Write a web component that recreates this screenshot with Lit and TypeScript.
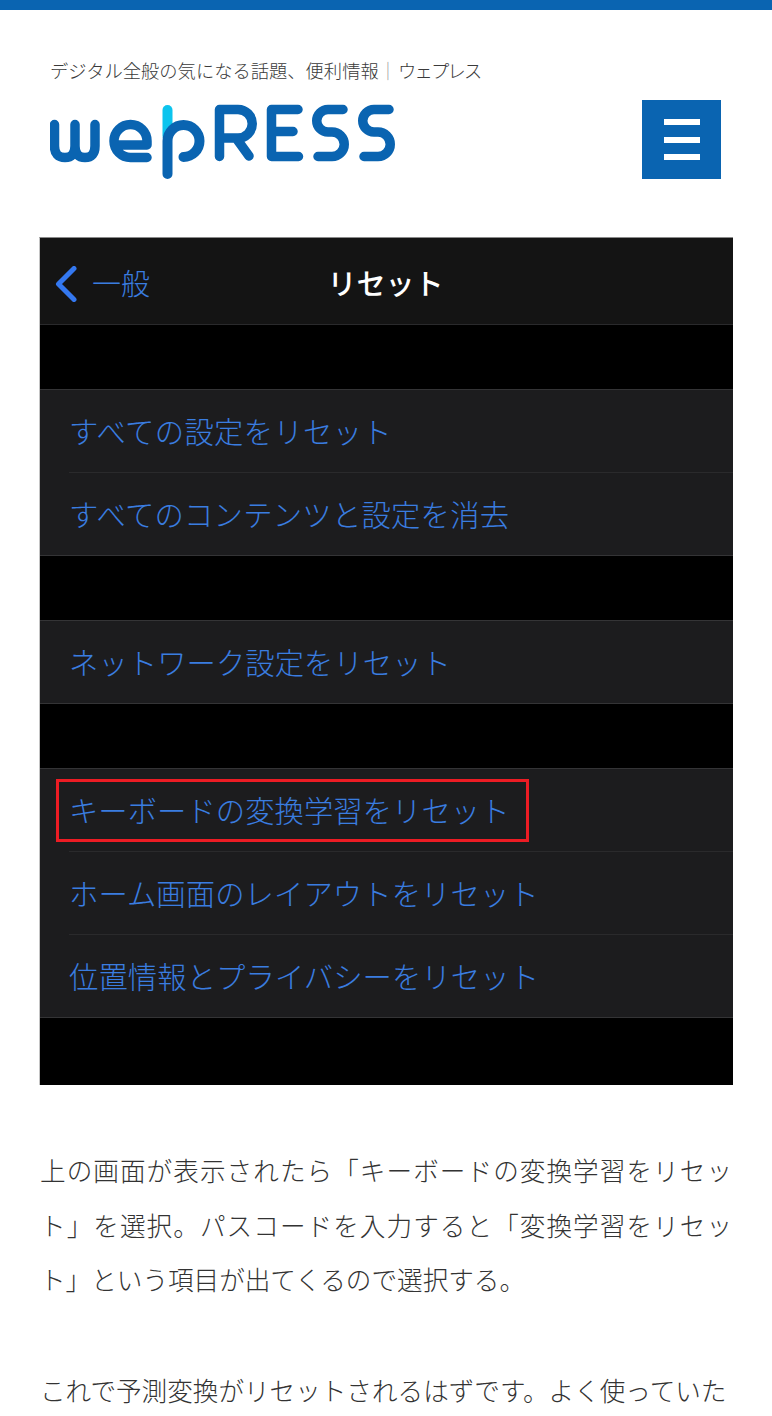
import { LitElement, html, css, svg } from "lit";
import { customElement } from "lit/decorators.js";

// spacing evens out the row widths of the iOS font in the screenshot
const groups = [
  [
    { text: "すべての設定をリセット", spacing: 0.36 },
    { text: "すべてのコンテンツと設定を消去", spacing: 0.27 },
  ],
  [{ text: "ネットワーク設定をリセット", spacing: 0.08 }],
  [
    { text: "キーボードの変換学習をリセット", spacing: 0.07 },
    { text: "ホーム画面のレイアウトをリセット", spacing: 0.12 },
    { text: "位置情報とプライバシーをリセット", spacing: 0.12 },
  ],
];

const sPath = "M343 109.500H328A11.250 11.250 0 0 0 328 132H332A12.250 12.250 0 0 1 332 156.500H318";

const logo = svg`
  <rect x="162.500" y="105" width="10" height="36" rx="5" fill="#0cc4ee" />
  <g fill="none" stroke="#0a64b1" stroke-width="9.500" stroke-linecap="round" stroke-linejoin="round">
    <path d="M54.500 124.500V146Q54.500 157.500 65 157.500Q75 157.500 75 146V124.500M75 146Q75 157.500 85 157.500Q95 157.500 95 146V124.500" />
    <path d="M147 157.500H130.500A16.500 16.500 0 1 1 130.500 124.500A16.500 16.500 0 0 1 147 141V145H115" />
    <path d="M167.500 174V141A16 16 0 1 1 183.500 157" stroke-width="10" />
    <path d="M219.500 156.500V109.500H238A14.250 14.250 0 0 1 238 138H220M236 138L249 156" />
    <path d="M298 109.500H271.500V156.500H298.500M271.500 131.500H293" />
    <path d="${sPath}" />
    <path d="${sPath}" transform="translate(46 0)" />
  </g>
`;

@customElement("app-root")
export class AppRoot extends LitElement {
  static styles = css`
    :host {
      display: block;
      height: 1416px;
      overflow: hidden;
      background: #fff;
      font-family: "Noto Sans CJK JP", "Noto Sans", sans-serif;
    }

    .topbar {
      height: 10px;
      background: #0a64b1;
    }

    .header {
      display: flex;
      justify-content: space-between;
      align-items: flex-end;
      height: 169px;
      padding: 0 51px 0 50px;
    }

    .tagline {
      font-size: 18.300px;
      line-height: 22px;
      font-weight: 300;
      color: #3a3a3a;
      margin-bottom: 19px;
      white-space: nowrap;
    }

    .tagline .sep {
      color: #999;
    }

    .tagline .name {
      margin-left: 1px;
      letter-spacing: -1.800px;
    }

    .logo {
      display: block;
      width: 350px;
      height: 79px;
    }

    .menu {
      display: flex;
      flex-direction: column;
      justify-content: center;
      gap: 11.700px;
      align-items: center;
      width: 79px;
      height: 79px;
      background: #0a64b1;
    }

    .menu span {
      width: 36px;
      height: 6px;
      background: #fff;
    }

    .shot {
      position: relative;
      margin: 58px 39px 0 39px;
      height: 847px;
      background: #000;
      border-top: 1px solid #8a8a8a;
      border-left: 1px solid #c4c4c4;
    }

    .nav {
      display: grid;
      grid-template-columns: 1fr auto 1fr;
      align-items: center;
      height: 84px;
      padding-top: 2px;
      background: #141414;
      border-bottom: 1px solid #2a2a2c;
    }

    .back {
      display: flex;
      align-items: center;
      gap: 15px;
      padding-left: 15px;
      font-size: 29px;
      font-weight: 300;
      color: #3a7de0;
    }

    .back svg {
      display: block;
      width: 22px;
      height: 36px;
      margin-top: 3px;
    }

    .title {
      margin-right: 2px;
      font-size: 29px;
      font-weight: 500;
      color: #fff;
    }

    .group {
      margin-top: 64px;
      background: #1c1c1e;
      border-top: 1px solid #343436;
      border-bottom: 1px solid #343436;
    }

    .row {
      display: flex;
      align-items: center;
      height: 80px;
      margin-left: 29px;
      padding-bottom: 2px;
      font-size: 29.300px;
      font-weight: 300;
      color: #3a7de0;
      border-top: 1px solid #2a2a2c;
    }

    .row:first-child {
      border-top: none;
    }

    .mark {
      position: absolute;
      left: 16px;
      top: 541px;
      width: 473px;
      height: 63px;
      box-sizing: border-box;
      border: 3px solid #ec1c24;
    }

    .body {
      margin: 58px 40px 0;
      font-size: 25.600px;
      line-height: 54.500px;
      font-weight: 300;
      text-align: justify;
      color: #333;
    }

    .body p {
      margin: 0 0 56px;
    }
  `;

  render() {
    return html`
      <div class="topbar"></div>
      <header class="header">
        <div>
          <div class="tagline">デジタル全般の気になる話題、便利情報<span class="sep">｜</span><span class="name">ウェプレス</span></div>
          <svg class="logo" viewBox="50 100 350 79">${logo}</svg>
        </div>
        <div class="menu"><span></span><span></span><span></span></div>
      </header>
      <div class="shot">
        <div class="nav">
          <div class="back">
            <svg viewBox="0 0 22 36" fill="none" stroke="#3478f0" stroke-width="5" stroke-linecap="round" stroke-linejoin="round">
              <path d="M19 2.500L3.500 18L19 33.500" />
            </svg>
            一般
          </div>
          <div class="title">リセット</div>
          <div></div>
        </div>
        ${groups.map(
          (g) => html`<div class="group">
            ${g.map((r) => html`<div class="row" style="letter-spacing:${r.spacing}px">${r.text}</div>`)}
          </div>`
        )}
        <div class="mark"></div>
      </div>
      <div class="body">
        <p>上の画面が表示されたら「キーボードの変換学習をリセット」を選択。パスコードを入力すると「変換学習をリセット」という項目が出てくるので選択する。</p>
        <p>これで予測変換がリセットされるはずです。よく使っていた</p>
      </div>
    `;
  }
}
